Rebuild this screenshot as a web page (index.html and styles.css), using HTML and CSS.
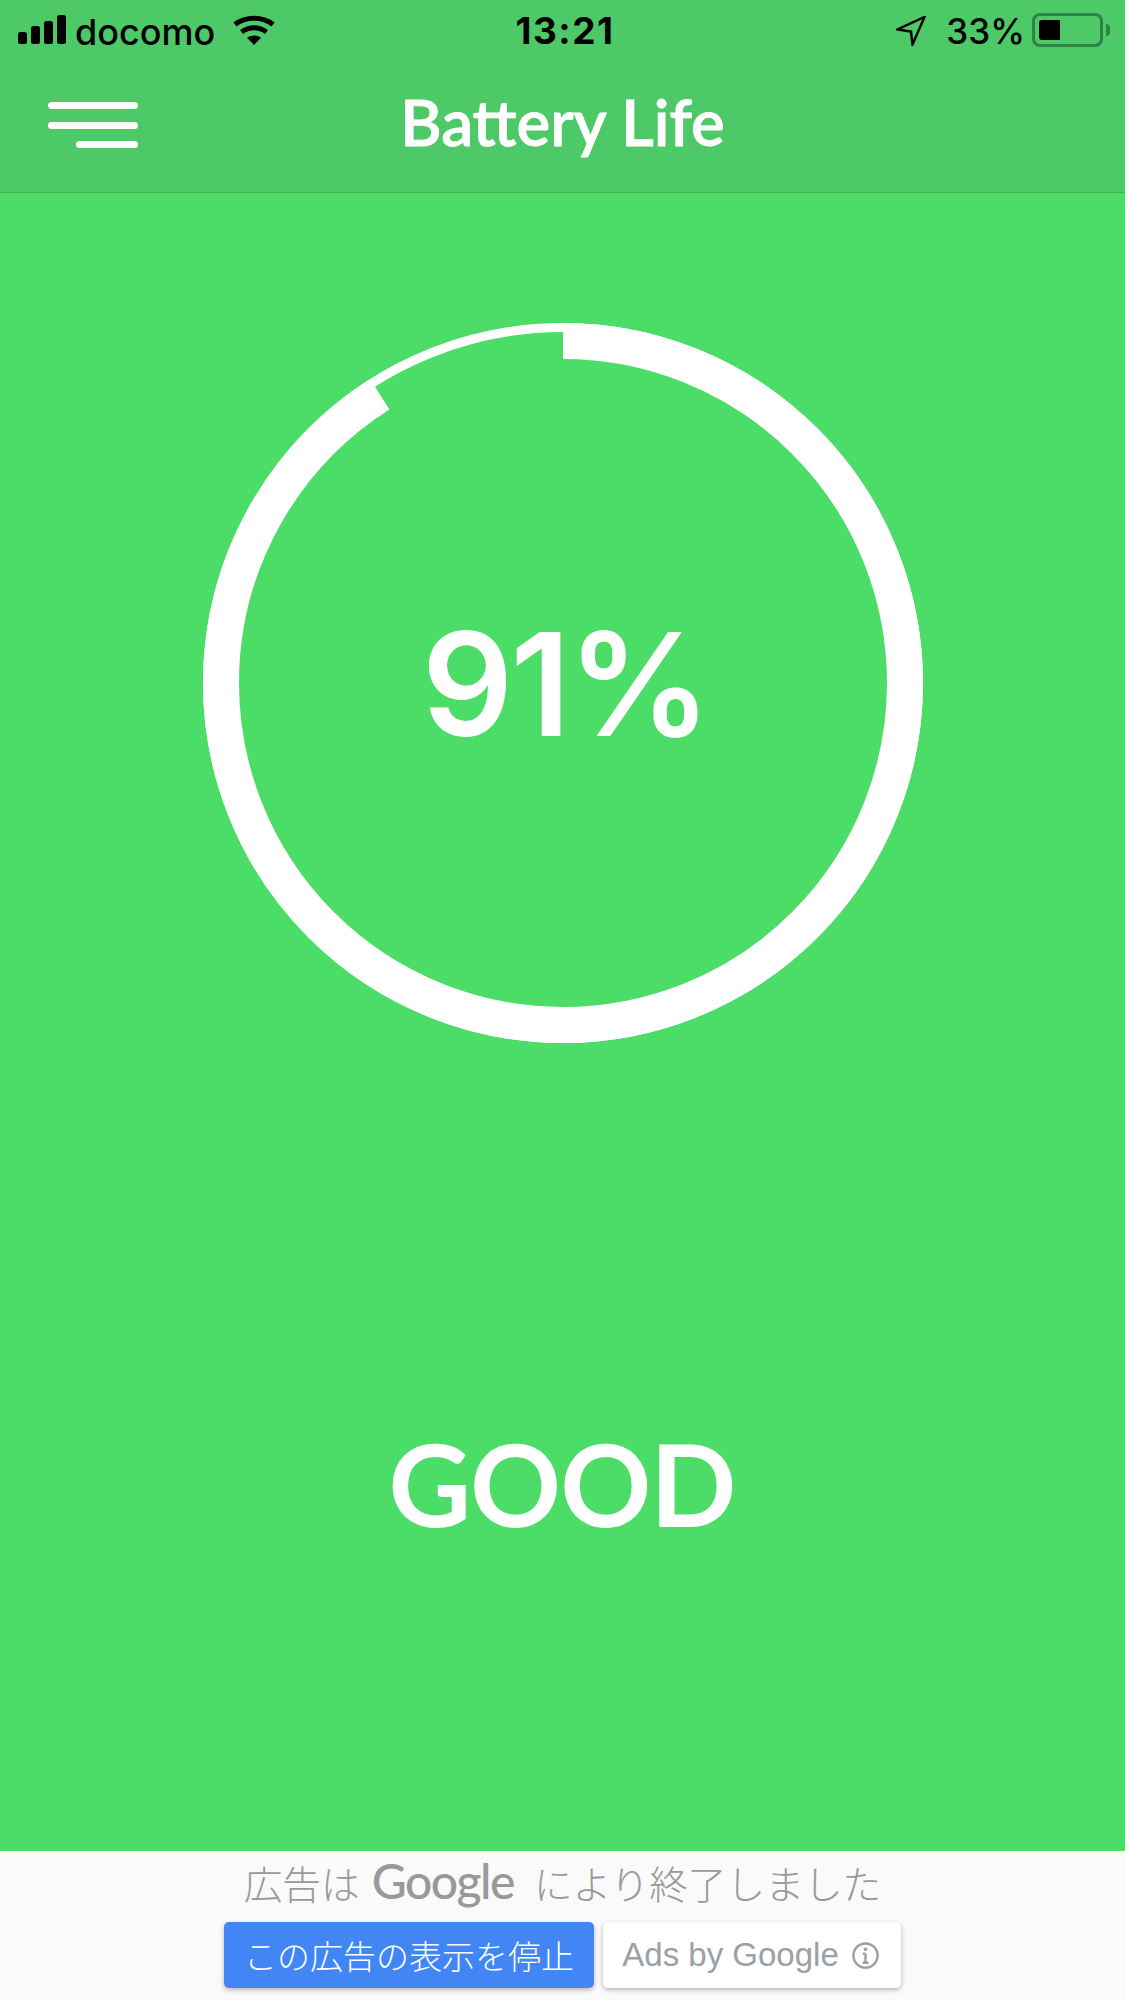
FILE: index.html
```html
<!DOCTYPE html>
<html lang="ja">
<head>
<meta charset="utf-8">
<title>Battery Life</title>
<link rel="stylesheet" href="styles.css">
</head>
<body>
<div class="screen">
  <header class="top">
    <div class="status">
      <div class="status-left">
        <svg class="signal" viewBox="0 0 48 29" aria-hidden="true">
          <rect x="0" y="17" width="9" height="12" rx="2.5"/>
          <rect x="13" y="11" width="9" height="18" rx="2.5"/>
          <rect x="26" y="6" width="9" height="23" rx="2.5"/>
          <rect x="39" y="0" width="9" height="29" rx="2.5"/>
        </svg>
        <span class="carrier">docomo</span>
        <svg class="wifi" viewBox="0 0 42 30" aria-hidden="true">
          <path class="wifi-arc" d="M2 9.500C12.500 1.200 29.500 1.200 40 9.500"/>
          <path class="wifi-arc" d="M8.500 17C16 11.300 26 11.300 33.500 17"/>
          <path d="M21 30L14 22.800C18.200 19.700 23.800 19.700 28 22.800Z"/>
        </svg>
      </div>
      <div class="clock">13:21</div>
      <div class="status-right">
        <svg class="locate" viewBox="0 0 30 30" aria-hidden="true">
          <path d="M28.500 1L1.500 13.500L15 15.500L16.500 28.500Z"/>
        </svg>
        <span class="charge">33%</span>
        <div class="battery"><div class="battery-level"></div></div>
        <div class="battery-nub"></div>
      </div>
    </div>
    <nav class="nav">
      <div class="menu">
        <span class="menu-bar"></span>
        <span class="menu-bar"></span>
        <span class="menu-bar menu-bar-short"></span>
      </div>
      <h1 class="nav-title">Battery Life</h1>
    </nav>
  </header>

  <main class="content">
    <div class="gauge">
      <svg class="gauge-ring" viewBox="0 0 720 720" aria-hidden="true">
        <circle class="ring-track" cx="360" cy="360" r="355.500"/>
        <circle class="ring-value" cx="360" cy="360" r="342" pathLength="100" transform="rotate(-90 360 360)"/>
      </svg>
      <div class="gauge-value">91%</div>
    </div>
    <div class="verdict">GOOD</div>
  </main>

  <footer class="ad">
    <div class="ad-message">広告は<span class="ad-brand">Google</span>により終了しました</div>
    <div class="ad-actions">
      <button class="ad-stop">この広告の表示を停止</button>
      <button class="ad-info">Ads by Google
        <svg class="info-icon" viewBox="0 0 24 24" aria-hidden="true">
          <circle cx="12" cy="12" r="10"/>
          <path d="M12 10.500V18M9.500 18H14.500M9.800 10.500H12"/>
          <circle class="info-dot" cx="12" cy="6.800" r="1.500"/>
        </svg>
      </button>
    </div>
  </footer>
</div>
</body>
</html>
```
FILE: styles.css
```css
* {
  box-sizing: border-box;
}

html,
body {
  margin: 0;
  padding: 0;
}

.screen {
  width: 1125px;
  height: 2001px;
  display: flex;
  flex-direction: column;
  overflow: hidden;
  background: #4cdc68;
  font-family: "Lato", "Noto Sans", sans-serif;
}

/* Status bar and navigation */
.top {
  height: 193px;
  flex: none;
  display: flex;
  flex-direction: column;
  background: #4dc967;
  border-bottom: 1px solid #3fb257;
}

.status {
  height: 60px;
  display: grid;
  grid-template-columns: 1fr auto 1fr;
  align-items: flex-start;
  color: #000;
  font-family: "Inter", "Liberation Sans", sans-serif;
}

.status-left {
  display: flex;
  align-items: flex-start;
  padding: 15px 0 0 18px;
}

.signal {
  width: 48px;
  height: 29px;
  fill: #000;
}

.carrier {
  margin: -5px 0 0 9px;
  font-size: 36px;
  line-height: 44px;
  font-weight: 500;
}

.wifi {
  width: 42px;
  height: 30px;
  margin-left: 18px;
  fill: #000;
}

.wifi-arc {
  fill: none;
  stroke: #000;
  stroke-width: 5;
}

.clock {
  padding: 9px 0 0 5px;
  font-size: 37px;
  line-height: 44px;
  font-weight: 700;
  letter-spacing: 1.500px;
}

.status-right {
  display: flex;
  justify-content: flex-end;
  align-items: flex-start;
  padding: 13px 15px 0 0;
}

.locate {
  width: 30px;
  height: 30px;
  margin: 3px 0 0 0;
  fill: none;
  stroke: #000;
  stroke-width: 2.4;
}

.charge {
  margin: -3px 0 0 20px;
  font-size: 35px;
  line-height: 42px;
  font-weight: 500;
}

.battery {
  width: 71px;
  height: 34px;
  margin-left: 7px;
  padding: 4px;
  border: 3px solid #2f8145;
  border-radius: 8px;
}

.battery-level {
  width: 21px;
  height: 100%;
  background: #000;
  border-radius: 3px 0 0 3px;
}

.battery-nub {
  width: 4px;
  height: 12px;
  margin: 11px 0 0 3px;
  background: #2f8145;
  border-radius: 0 4px 4px 0;
}

.nav {
  flex: 1;
  display: grid;
  grid-template-columns: 1fr auto 1fr;
  align-items: center;
}

.menu {
  width: 90px;
  margin: -2px 0 0 48px;
  display: flex;
  flex-direction: column;
  align-items: flex-end;
  gap: 12.500px;
}

.menu-bar {
  width: 90px;
  height: 7px;
  background: #fff;
  border-radius: 4px;
}

.menu-bar-short {
  width: 62px;
}

.nav-title {
  grid-column: 2;
  margin: -8px 0 0;
  color: #fff;
  font-size: 63.500px;
  line-height: 74px;
  font-weight: 600;
  -webkit-text-stroke: 0.8px #fff;
  white-space: nowrap;
}

/* Battery health gauge */
.content {
  flex: 1;
  display: flex;
  flex-direction: column;
  align-items: center;
  padding-top: 130px;
}

.gauge {
  width: 720px;
  height: 720px;
  display: grid;
  place-items: center;
}

.gauge-ring,
.gauge-value {
  grid-area: 1 / 1;
}

.gauge-ring {
  width: 720px;
  height: 720px;
  fill: none;
  stroke: #fff;
}

.ring-track {
  stroke-width: 9;
}

.ring-value {
  stroke-width: 36;
  stroke-dasharray: 91 100;
}

.gauge-value {
  padding: 2px 0 0 5px;
  color: #fff;
  font-family: "Inter", "Lato", sans-serif;
  font-size: 143px;
  line-height: 170px;
  font-weight: 600;
  letter-spacing: -3px;
}

.verdict {
  margin-top: 375px;
  color: #fff;
  font-size: 112px;
  line-height: 130px;
  font-weight: 600;
  -webkit-text-stroke: 2px #fff;
}

/* Ad-closed banner */
.ad {
  height: 150px;
  flex: none;
  display: flex;
  flex-direction: column;
  align-items: center;
  background: #fafafa;
}

.ad-message {
  margin-top: 2px;
  color: #999;
  font-family: "Noto Sans CJK JP", sans-serif;
  font-size: 38.700px;
  line-height: 55px;
  font-weight: 300;
  white-space: nowrap;
}

.ad-brand {
  margin: 0 20px 0 12px;
  font-family: "Lato", sans-serif;
  font-size: 48px;
  font-weight: 500;
  letter-spacing: -1.500px;
}

.ad-actions {
  margin-top: 12px;
  display: flex;
  gap: 9px;
}

.ad-stop,
.ad-info {
  height: 66px;
  padding: 0;
  border: 0;
  border-radius: 5px;
  box-shadow: 0 2px 5px rgba(0, 0, 0, 0.28);
  white-space: nowrap;
}

.ad-stop {
  width: 370px;
  background: #4285f4;
  color: #fff;
  font-family: "Noto Sans CJK JP", sans-serif;
  font-size: 33px;
  font-weight: 300;
}

.ad-info {
  width: 298px;
  display: flex;
  align-items: center;
  justify-content: center;
  gap: 12px;
  padding-right: 2px;
  background: #fff;
  color: #9aa0a6;
  font-family: "Liberation Sans", sans-serif;
  font-size: 33px;
}

.info-icon {
  width: 29px;
  height: 29px;
  fill: none;
  stroke: #9aa0a6;
  stroke-width: 2;
}

.info-dot {
  fill: #9aa0a6;
  stroke: none;
}
```
